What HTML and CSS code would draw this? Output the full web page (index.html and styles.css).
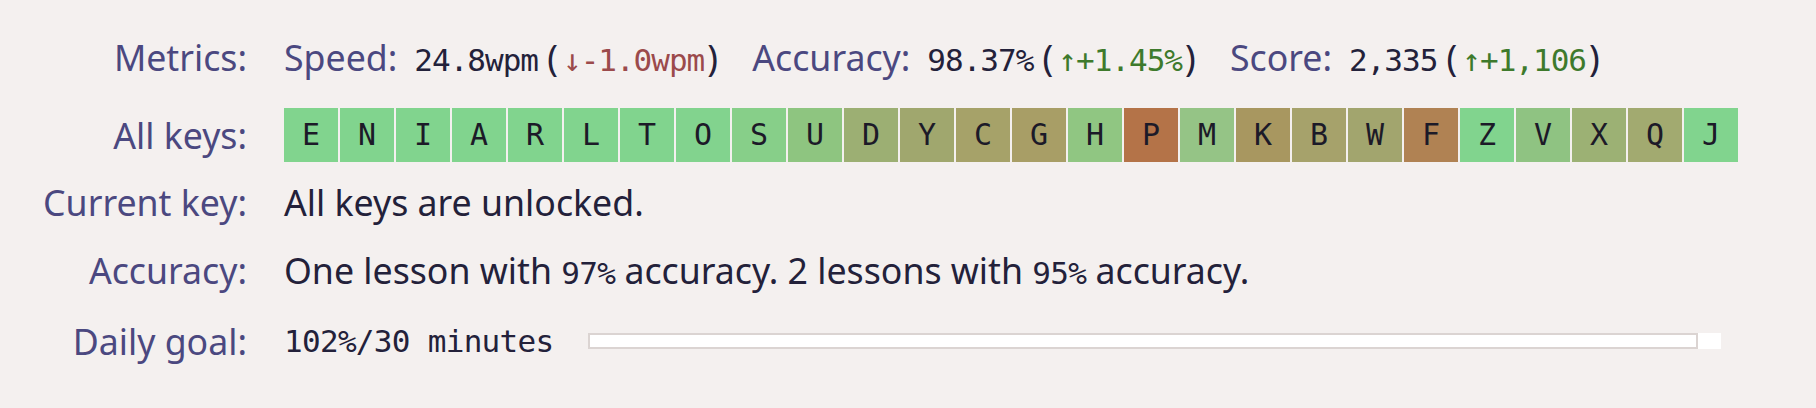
FILE: index.html
```html
<!DOCTYPE html>
<html lang="en">
<head>
<meta charset="utf-8">
<title>Typing progress</title>
<link rel="stylesheet" href="styles.css">
</head>
<body>
<div class="summary">
  <div class="label row-metrics">Metrics:</div>
  <div class="value row-metrics">
    <span class="metric"><span class="name">Speed:</span><span class="num">24.8wpm</span> (<span class="num delta down">↓-1.0wpm</span>)</span>
    <span class="metric"><span class="name">Accuracy:</span><span class="num">98.37%</span> (<span class="num delta up">↑+1.45%</span>)</span>
    <span class="metric"><span class="name">Score:</span><span class="num">2,335</span> (<span class="num delta up">↑+1,106</span>)</span>
  </div>

  <div class="label row-keys">All keys:</div>
  <div class="value row-keys">
    <div class="keys">
      <span class="key" style="background:#81d48e">E</span>
      <span class="key" style="background:#81d48e">N</span>
      <span class="key" style="background:#81d48e">I</span>
      <span class="key" style="background:#81d48e">A</span>
      <span class="key" style="background:#81d48e">R</span>
      <span class="key" style="background:#81d48e">L</span>
      <span class="key" style="background:#81d48e">T</span>
      <span class="key" style="background:#82d38e">O</span>
      <span class="key" style="background:#87cf89">S</span>
      <span class="key" style="background:#8ec580">U</span>
      <span class="key" style="background:#9caf73">D</span>
      <span class="key" style="background:#a0a76e">Y</span>
      <span class="key" style="background:#a6a269">C</span>
      <span class="key" style="background:#a89e66">G</span>
      <span class="key" style="background:#90c682">H</span>
      <span class="key" style="background:#b47348">P</span>
      <span class="key" style="background:#95c486">M</span>
      <span class="key" style="background:#a89760">K</span>
      <span class="key" style="background:#a6a26b">B</span>
      <span class="key" style="background:#a2a56e">W</span>
      <span class="key" style="background:#b08253">F</span>
      <span class="key" style="background:#81d48e">Z</span>
      <span class="key" style="background:#8fc382">V</span>
      <span class="key" style="background:#9cb174">X</span>
      <span class="key" style="background:#a2aa70">Q</span>
      <span class="key" style="background:#81d48e">J</span>
    </div>
  </div>

  <div class="label row-text">Current key:</div>
  <div class="value row-text">All keys are unlocked.</div>

  <div class="label row-text">Accuracy:</div>
  <div class="value row-text">One lesson with <span class="num">97%</span> accuracy. 2 lessons with <span class="num">95%</span> accuracy.</div>

  <div class="label row-text">Daily goal:</div>
  <div class="value row-text goal">
    <span class="num">102%/30 minutes</span>
    <div class="bar"><div class="fill" style="width:102%"></div></div>
  </div>
</div>
</body>
</html>
```

FILE: styles.css
```css
html, body {
  margin: 0;
  padding: 0;
  background: #f4f0ef;
}

body {
  font-family: "Noto Sans", "Open Sans", sans-serif;
  font-size: 35.7px;
  color: #23213a;
}

.summary {
  display: grid;
  grid-template-columns: 247px 1fr;
  column-gap: 37px;
  padding-top: 33px;
}

.label {
  text-align: right;
  color: #4b4880;
  line-height: 48px;
  white-space: nowrap;
}

.value {
  line-height: 48px;
  white-space: nowrap;
}

.row-metrics {
  margin-bottom: 24px;
}

.row-keys {
  height: 54px;
  line-height: 54px;
  margin-bottom: 16px;
}

.row-text {
  margin-bottom: 20px;
}

.metric {
  margin-right: 25px;
}

.name {
  color: #4b4880;
  margin-right: 17px;
}

.num {
  font-family: "DejaVu Sans Mono", "Liberation Mono", monospace;
  font-size: 31px;
  letter-spacing: -0.7px;
}

.metric .num {
  letter-spacing: -1px;
}

.delta {
  padding-left: 5px;
  padding-right: 3px;
}

.down {
  color: #9b4a4b;
}

.up {
  color: #3e7a2c;
}

.keys {
  display: flex;
  gap: 2px;
}

.key {
  width: 54px;
  height: 54px;
  display: flex;
  align-items: center;
  justify-content: center;
  font-family: "DejaVu Sans Mono", "Liberation Mono", monospace;
  font-size: 30px;
  color: #1c1a28;
}

.goal {
  display: flex;
  align-items: center;
}

.bar {
  position: relative;
  width: 1110px;
  height: 16px;
  margin-left: 35px;
  background: #fff;
}

.fill {
  height: 100%;
  background: #fff;
}

.bar::after {
  content: "";
  position: absolute;
  inset: 0;
  border: 2px solid #dbd4d2;
}
```
